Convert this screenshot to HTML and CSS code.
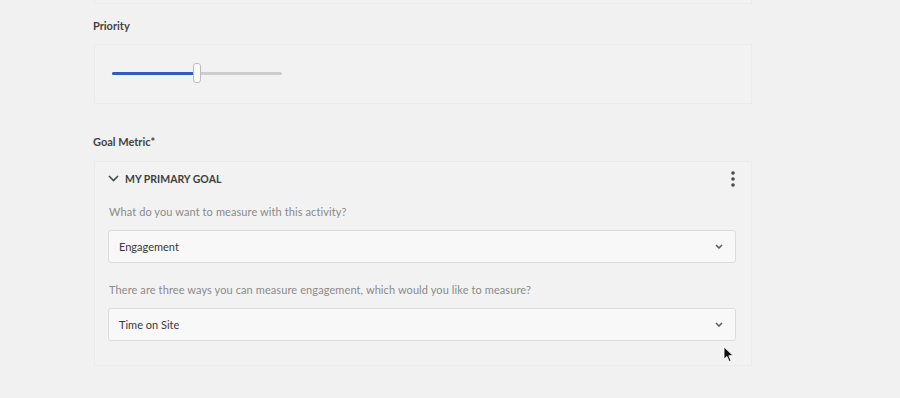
FILE: index.html
```html
<!DOCTYPE html>
<html lang="en">

<head>
    <meta charset="UTF-8">
    <meta name="viewport" content="width=device-width, initial-scale=1.0">
    <title>Activity Goals</title>
    <link rel="stylesheet" href="styles.css">
</head>

<body>

    <div class="page">
        <div class="prev-panel"></div>

        <div class="field-label priority-label">Priority</div>
        <div class="panel priority-panel">
            <div class="slider">
                <div class="slider-fill" style="width: 82px;"></div>
                <div class="slider-handle" style="left: 81px;"></div>
            </div>
        </div>

        <div class="field-label goal-label">Goal Metric*</div>
        <div class="panel goal-panel">
            <div class="goal-header">
                <svg class="chevron-left" width="11" height="7" viewBox="0 0 11 7">
                    <path d="M1 1 L5.5 5.5 L10 1" fill="none" stroke="#4a4a4a" stroke-width="1.6" />
                </svg>
                <span class="goal-title">MY PRIMARY GOAL</span>
                <svg class="kebab" width="4" height="16" viewBox="0 0 4 16">
                    <circle cx="2" cy="2" r="1.8" fill="#4a4a4a" />
                    <circle cx="2" cy="8" r="1.8" fill="#4a4a4a" />
                    <circle cx="2" cy="14" r="1.8" fill="#4a4a4a" />
                </svg>
            </div>

            <p class="question first-question">What do you want to measure with this activity?</p>
            <div class="dropdown">
                <span>Engagement</span>
                <svg width="8" height="5" viewBox="0 0 8 5">
                    <path d="M1 1 L4 4 L7 1" fill="none" stroke="#5a5a5a" stroke-width="1.5" />
                </svg>
            </div>

            <p class="question">There are three ways you can measure engagement, which would you like to measure?</p>
            <div class="dropdown">
                <span>Time on Site</span>
                <svg width="8" height="5" viewBox="0 0 8 5">
                    <path d="M1 1 L4 4 L7 1" fill="none" stroke="#5a5a5a" stroke-width="1.5" />
                </svg>
            </div>
        </div>
    </div>

    <svg class="cursor" width="12" height="17" viewBox="0 0 12 17">
        <path d="M1 1 L1 13 L4 10.5 L6.2 15.5 L8 14.7 L5.8 9.8 L10 9.6 Z" fill="#111" stroke="#fff" stroke-width="0.8" />
    </svg>

</body>

</html>
```

FILE: styles.css
```css
/* Global Styles */
body {
    font-family: 'Lato', 'Liberation Sans', sans-serif;
    background-color: #f1f1f1;
    margin: 0;
    padding: 0;
    color: #4a4a4a;
}

.page {
    margin-left: 94px;
    width: 658px;
}

.prev-panel {
    height: 3px;
    border: 1px solid #ebebeb;
    border-top: none;
    background-color: #f2f2f2;
}

.field-label {
    font-size: 11px;
    font-weight: 700;
    line-height: 16px;
    color: #444;
    margin-left: -1px;
}

.priority-label {
    margin-top: 14px;
    margin-bottom: 10px;
}

.goal-label {
    margin-top: 30px;
    margin-bottom: 11px;
}

.panel {
    box-sizing: border-box;
    border: 1px solid #ebebeb;
    background-color: #f2f2f2;
}

/* Slider */
.priority-panel {
    height: 60px;
    padding: 0 0 0 17px;
    display: flex;
    align-items: center;
}

.slider {
    position: relative;
    width: 170px;
    height: 3px;
    background-color: #cdcdcd;
    border-radius: 2px;
    margin-top: -2px;
}

.slider-fill {
    height: 3px;
    background-color: #2f5bbf;
    border-radius: 2px;
}

.slider-handle {
    position: absolute;
    top: -9px;
    width: 6px;
    height: 18px;
    background-color: #fafafa;
    border: 1px solid #bdbdbd;
    border-radius: 3px;
}

/* Goal Metric */
.goal-panel {
    padding: 0 15px 24px 13px;
}

.goal-header {
    height: 33px;
    display: flex;
    align-items: center;
}

.chevron-left {
    margin-right: 6px;
}

.goal-title {
    font-size: 10.5px;
    font-weight: 700;
    color: #3f3f3f;
    flex: 1;
}

.kebab {
    margin-right: 1px;
}

.question {
    margin: 19px 0 10px 1px;
    font-size: 11px;
    line-height: 16px;
    letter-spacing: 0.1px;
    color: #8a8a8a;
}

.first-question {
    margin-top: 9px;
}

.dropdown {
    box-sizing: border-box;
    height: 33px;
    padding: 0 12px 0 10px;
    display: flex;
    align-items: center;
    justify-content: space-between;
    background-color: #f8f8f8;
    border: 1px solid #dcdcdc;
    border-radius: 3px;
    font-size: 11px;
    color: #3a3a3a;
}

.cursor {
    position: absolute;
    left: 723px;
    top: 346px;
}
```
